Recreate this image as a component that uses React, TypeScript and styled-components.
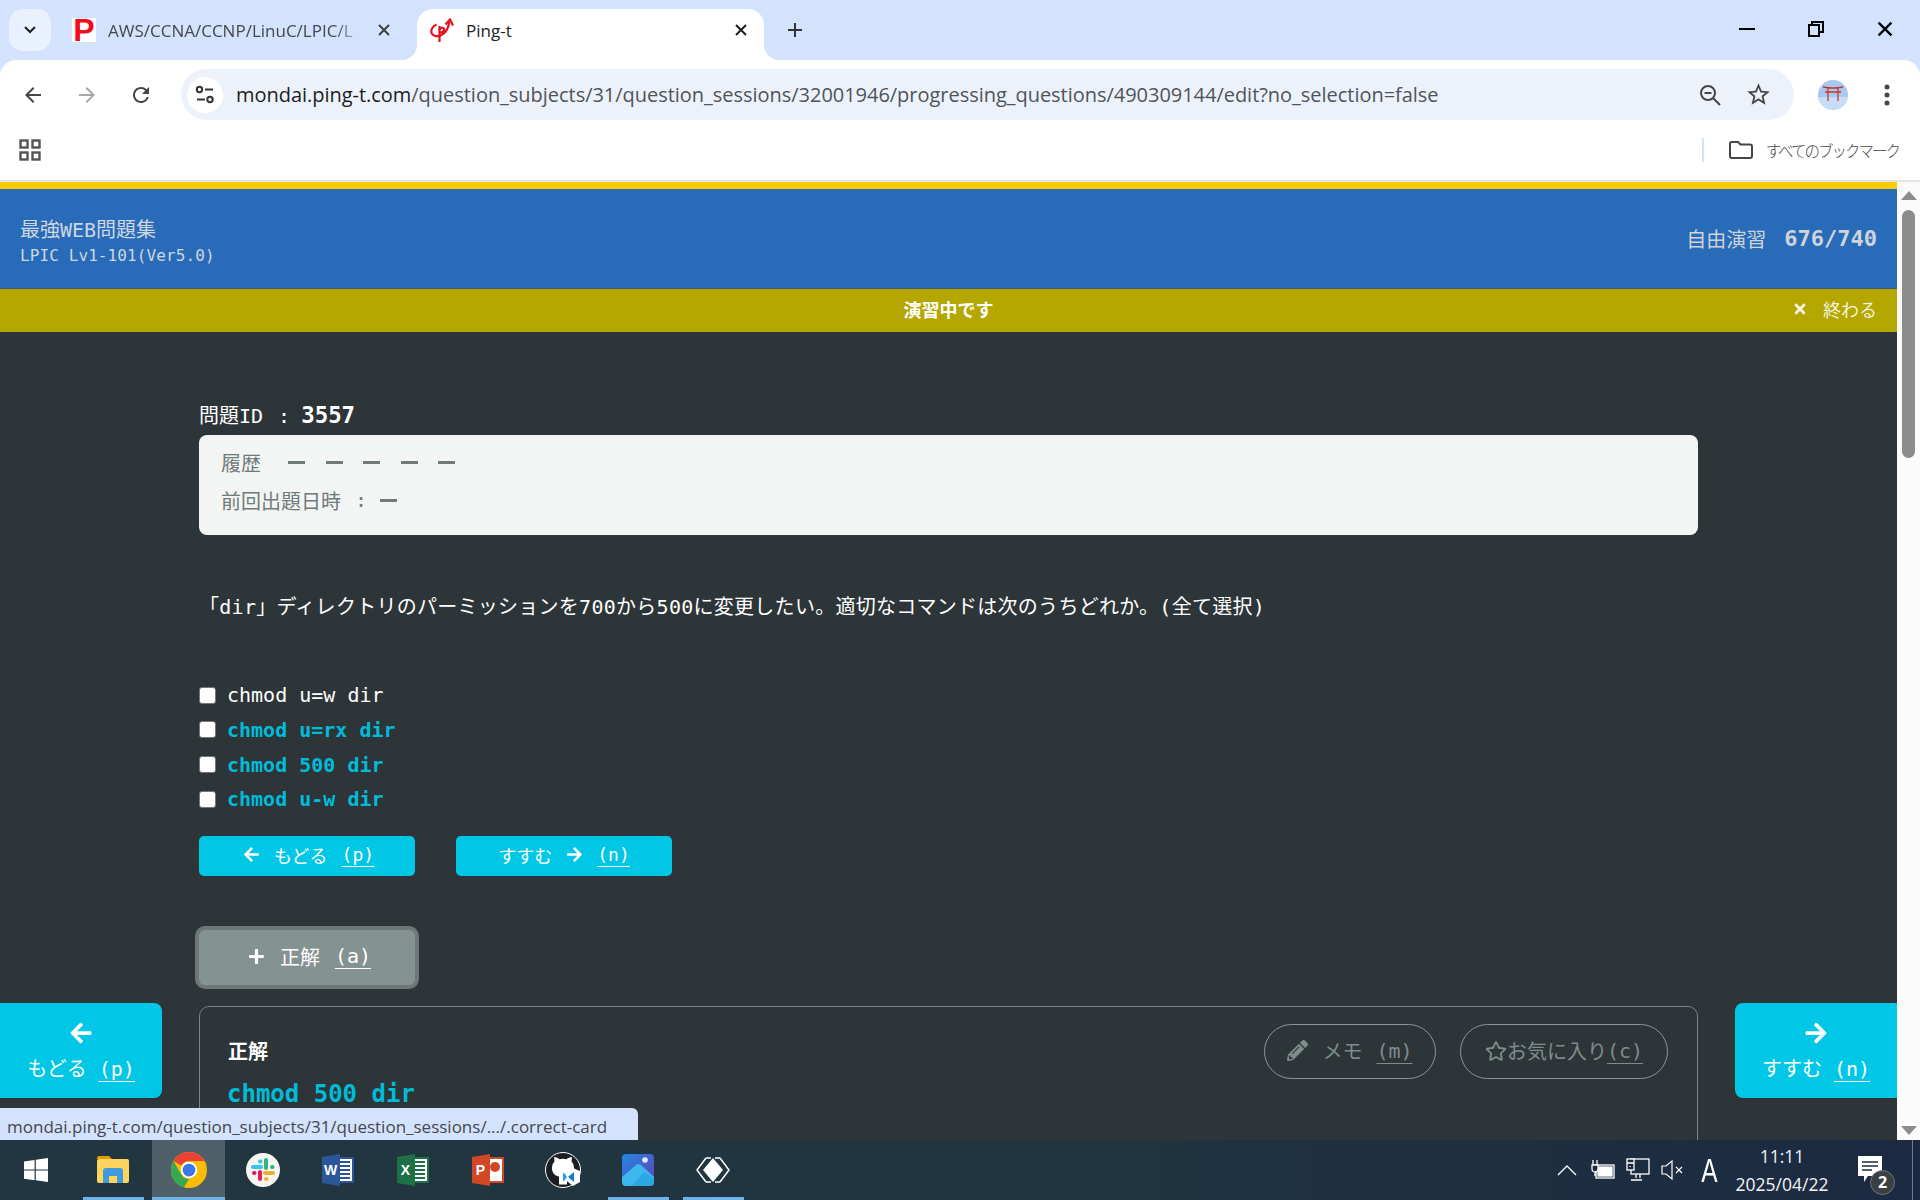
import React from "react";
import styled, { createGlobalStyle } from "styled-components";
import { FaArrowLeft, FaArrowRight, FaPlus, FaTimes, FaPencilAlt, FaRegStar } from "react-icons/fa";

const MONO = `"DejaVu Sans Mono", "Noto Sans CJK JP", monospace`;
const UI = `"Open Sans", "Noto Sans CJK JP", sans-serif`;

const Global = createGlobalStyle`
  html, body { margin: 0; padding: 0; height: 1200px; overflow: hidden; background: #2e3538; }
  * { box-sizing: border-box; }
`;

const Screen = styled.div`
  width: 1920px; height: 1200px; display: flex; flex-direction: column; overflow: hidden;
  background: #d3e3fd; font-family: ${UI};
`;

/* ---------- browser chrome ---------- */
const TabStrip = styled.div`
  height: 60px; flex: none; display: flex; align-items: flex-start; background: #d3e3fd;
`;
const TabListButton = styled.div`
  width: 42px; height: 42px; margin: 9px 0 0 9px; border-radius: 14px; background: #e9f0fe;
  display: flex; align-items: center; justify-content: center;
`;
const InactiveTab = styled.div`
  width: 366px; height: 42px; margin-top: 9px; padding: 0 0 0 21px;
  display: flex; align-items: center; color: #44474c;
`;
const FaviconP = styled.span`
  width: 24px; height: 24px; flex: none; background: #fff; color: #f10d1c; display: flex;
  align-items: center; justify-content: center;
  font: bold 32px/24px "Liberation Sans", sans-serif;
`;
const TabTitle = styled.span<{ $w: number; $fade?: boolean; $dark?: boolean }>`
  width: ${p => p.$w}px; margin-left: 12px; font-size: 17px; white-space: nowrap;
  color: ${p => (p.$dark ? "#202124" : "#44474c")};
  ${p => p.$fade && "-webkit-mask-image: linear-gradient(90deg,#000 90%,rgba(0,0,0,.25) 100%);"}
`;
const TabClose = styled.span<{ $ml: number }>`
  margin-left: ${p => p.$ml}px; width: 14px; height: 14px; display: flex; flex: none;
`;
const ActiveTab = styled.div`
  position: relative; width: 347px; height: 51px; margin-top: 9px; padding: 0 0 9px 13px;
  background: #fff; border-radius: 16px 16px 0 0; display: flex; align-items: center;
  &::before, &::after { content: ""; position: absolute; bottom: 0; width: 16px; height: 16px; }
  &::before { left: -16px; background: radial-gradient(circle at 0 0, transparent 16px, #fff 16.5px); }
  &::after { right: -16px; background: radial-gradient(circle at 100% 0, transparent 16px, #fff 16.5px); }
`;
const NewTab = styled.div`
  width: 62px; height: 42px; margin-top: 9px; display: flex; align-items: center; justify-content: center;
`;
const WindowControls = styled.div`margin-left: auto; display: flex; padding-right: 1px;`;
const WindowButton = styled.div`
  width: 69px; height: 58px; display: flex; align-items: center; justify-content: center;
`;

const Toolbar = styled.div`
  height: 60px; flex: none; background: #fff; border-radius: 16px 16px 0 0;
  display: flex; align-items: flex-start; padding-left: 6px;
`;
const NavCell = styled.div`
  width: 54px; height: 51px; margin-top: 9px; display: flex; align-items: center; justify-content: center;
`;
const Omnibox = styled.div`
  width: 1613px; height: 51px; margin: 9px 0 0 13px; border-radius: 26px; background: #edf2fa;
  display: flex; align-items: center; padding-left: 6px;
`;
const SiteBadge = styled.div`
  width: 36px; height: 36px; border-radius: 50%; background: #fff; flex: none;
  display: flex; align-items: center; justify-content: center;
`;
const Url = styled.div`
  margin-left: 13px; flex: 1; font-size: 20px; color: #50545a; white-space: nowrap; letter-spacing: -0.03px;
  b { font-weight: 400; color: #1c1e21; }
`;
const OmniIcon = styled.div<{ $mr?: number }>`
  width: 48px; height: 48px; display: flex; align-items: center; justify-content: center; margin-right: ${p => p.$mr ?? 0}px;
`;
const Avatar = styled.div`
  width: 30px; height: 30px; margin: 20px 0 0 24px; border-radius: 50%; overflow: hidden; flex: none;
`;
const MenuDots = styled.div`
  margin: 20px 0 0 24px; width: 30px; height: 30px; display: flex; align-items: center; justify-content: center;
`;

const BookmarkBar = styled.div`
  height: 62px; flex: none; background: #fff; border-bottom: 2px solid #e3e3e3;
  display: flex; align-items: center; padding-left: 19px; padding-bottom: 1px;
`;
const BookmarkDivider = styled.div`
  margin-left: auto; width: 2px; height: 24px; background: #d3e3fd;
`;
const BookmarkFolder = styled.div`margin-left: 25px; display: flex;`;
const BookmarkLabel = styled.div`
  margin: 0 21px 0 13px; font-size: 15.5px; letter-spacing: -2px; color: #44474c; font-family: "Noto Sans CJK JP", sans-serif; font-weight: 300;
`;

/* ---------- viewport ---------- */
const Viewport = styled.div`flex: 1; min-height: 0; display: flex; overflow: hidden; position: relative;`;
const Page = styled.div`
  width: 1897px; flex: none; position: relative; overflow: hidden; background: #2e3538;
  font-family: ${MONO}; color: #fff;
`;
const YellowRule = styled.div`height: 7px; background: #ffcb05;`;
const Header = styled.header`
  height: 100px; background: #286bb9; border-bottom: 1px solid #43586e;
  display: flex; align-items: center; justify-content: space-between; padding: 0 20px 0 20px; color: #cfd6e0;
`;
const BrandTitle = styled.div`font-size: 20px; line-height: 30px; margin-top: 4px;`;
const BrandSub = styled.div`font-size: 16px; line-height: 22px; letter-spacing: 0.1px;`;
const Progress = styled.div`display: flex; align-items: center; gap: 18px; font-size: 20px; color: #cfd3da;`;
const ProgressCount = styled.span`font-size: 22px; font-weight: 700;`;

const StatusBar = styled.div`
  height: 43px; background: #b3a700; display: flex; align-items: center; position: relative; padding: 0 20px 4px;
`;
const StatusText = styled.div`flex: 1; text-align: center; font-size: 18px; font-weight: 700;`;
const QuitLink = styled.div`
  position: absolute; right: 20px; top: 0; height: 100%; padding-bottom: 4px; display: flex; align-items: center; gap: 15px; font-size: 18px; color: #f5f3dc;
`;

const Main = styled.main`padding: 68px 0 0 199px; width: 1698px;`;
const QuestionId = styled.div`
  height: 35px; font-size: 20px; line-height: 30px; display: flex; align-items: baseline; gap: 11px; word-spacing: 3px;
  strong { font-size: 22.4px; }
`;
const HistoryCard = styled.section`
  height: 100px; background: #f3f5f4; border-radius: 8px; padding: 9px 22px; color: #6f7b7b; font-size: 20px;
`;
const HistoryRow = styled.div`height: 37.5px; display: flex; align-items: center;`;
const Dash = styled.span<{ $ml: number }>`
  display: inline-block; width: 17px; height: 3px; background: #6f7b7b; margin-left: ${p => p.$ml}px;
`;
const Colon = styled.span`margin-left: 14px; width: 12px;`;
const Question = styled.p`margin: 57px 0 0; height: 30px; line-height: 30px; font-size: 20px; color: #fff; white-space: nowrap;
  letter-spacing: 0.27px;
`;
const Options = styled.div`margin-top: 56px; display: flex; flex-direction: column;`;
const Option = styled.label<{ $correct?: boolean }>`
  height: 34.67px; display: flex; align-items: center; gap: 11px; font-size: 20px;
  color: ${p => (p.$correct ? "#00bcd8" : "#fff")}; font-weight: ${p => (p.$correct ? 700 : 400)};
`;
const Check = styled.input`
  appearance: none; width: 17px; height: 17px; margin: 0; background: #fff; border: 1px solid #767676; border-radius: 3px; flex: none;
`;
const PagerRow = styled.div`margin-top: 19px; display: flex; gap: 41px;`;
const PagerButton = styled.div<{ $pl?: number }>`
  width: 216px; height: 40px; background: #00c7e5; border-radius: 5px; color: #fff; font-size: 18px;
  display: flex; align-items: center; justify-content: center; gap: 14px; padding: 0 0 2px ${p => p.$pl ?? 0}px;
`;
const Key = styled.span`
  text-decoration: underline; text-underline-offset: 5px; text-decoration-thickness: 1px;
`;
const RevealButton = styled.div`
  margin-top: 54px; width: 216px; height: 55px; background: #849292; border-radius: 6px; color: #fff; font-size: 20px;
  box-shadow: 0 0 0 4px #6f7778; display: flex; align-items: center; justify-content: center; gap: 15px; padding: 0 0 2px 5px;
`;
const AnswerCard = styled.section`
  margin-top: 21px; height: 300px; border: 1px solid #7a8484; border-radius: 10px; padding: 17px 29px 0 28px;
`;
const AnswerHead = styled.div`display: flex; align-items: center; height: 55px; gap: 24px;`;
const AnswerLabel = styled.div`font-size: 20px; font-weight: 700; margin: 0 auto 2px 0;`;
const Pill = styled.div<{ $w: number }>`
  width: ${p => p.$w}px; height: 55px; border: 1px solid #8a9696; border-radius: 28px; color: #7f8c8c; font-size: 20px;
  display: flex; align-items: center; justify-content: center; gap: 14px; padding-bottom: 1px;
`;
const TightPill = styled(Pill)`gap: 0;`;
const AnswerText = styled.div`margin: 1px 0 0 -1px; font-size: 24px; line-height: 28px; font-weight: 700; color: #00bcd8;`;

const SideNav = styled.div<{ $side: "left" | "right" }>`
  position: absolute; bottom: 42px; ${p => p.$side}: 0; width: 162px; height: 95px;
  border-radius: ${p => (p.$side === "left" ? "0 8px 8px 0" : "8px 0 0 8px")}; background: #00c7e5; color: #fff; font-size: 20px;
  display: flex; flex-direction: column; align-items: center; padding-top: 18px; gap: 10px;
`;
const SideLabel = styled.div`display: flex; gap: 12px; line-height: 28px;`;
const LinkPreview = styled.div`
  position: absolute; left: 0; bottom: 0; width: 638px; height: 32px; background: #d3e3fd; border-radius: 0 6px 0 0;
  padding: 3px 0 0 7px; font: 17px/32px ${UI}; color: #44474c; white-space: nowrap;
`;

const Scrollbar = styled.aside`
  flex: 1; background: #fbfbfb; display: flex; flex-direction: column; align-items: center; padding-top: 9px;
`;
const ScrollThumb = styled.div`width: 13px; height: 248px; margin-top: 10px; border-radius: 7px; background: #8c8c8c;`;
const ScrollArrow = styled.div<{ $down?: boolean }>`
  width: 0; height: 0; border-left: 8px solid transparent; border-right: 8px solid transparent;
  ${p => (p.$down ? "border-top: 9px solid #8c8c8c; margin-top: auto; margin-bottom: 5px;" : "border-bottom: 9px solid #8c8c8c;")}
`;

/* ---------- taskbar ---------- */
const Taskbar = styled.footer`
  height: 60px; flex: none; display: flex; align-items: stretch; color: #fff;
  background: linear-gradient(90deg, #213640 0%, #213540 50%, #1b2a42 100%);
`;
const TaskCell = styled.div<{ $open?: boolean; $active?: boolean }>`
  width: ${p => (p.$active ? 73 : 75)}px; margin-left: ${p => (p.$active ? 2 : 0)}px; position: relative; display: flex; align-items: center; justify-content: center;
  background: ${p => (p.$active ? "#4f6068" : "transparent")};
  ${p => p.$open && `&::after { content: ""; position: absolute; bottom: 0; height: 3px; background: #6fb3e8;
    left: ${p.$active ? 0 : 8}px; right: ${p.$active ? 0 : 6}px; }`}
`;
const StartCell = styled(TaskCell)`padding-right: 3px;`;
const Tray = styled.div`margin-left: auto; display: flex; align-items: center; padding-right: 22px;`;
const TrayCell = styled.div<{ $w: number }>`
  width: ${p => p.$w}px; height: 100%; display: flex; align-items: center; justify-content: center;
`;
const ImeLetter = styled.span`font: 400 34px/1 "Liberation Sans", sans-serif; transform: scaleX(.72);`;
const Clock = styled.div`
  width: 102px; margin-left: 4px; text-align: center; font-family: "Open Sans", sans-serif; font-size: 17.5px; line-height: 28px; color: #f2f4f6;
`;
const Notify = styled.div`position: relative; width: 40px; margin-left: 17px; height: 100%; display: flex; align-items: center; justify-content: center;`;
const NotifyBadge = styled.span`
  position: absolute; left: 20px; top: 30px; width: 25px; height: 25px; border-radius: 50%; background: #3a3f44; border: 1px solid #70757a;
  font: 700 16px/23px "Open Sans", sans-serif; text-align: center; color: #fff;
`;
const TrayEdge = styled.div`width: 1px; background: #6b7a8c;`;

const Ic = ({ d, s = 24, c = "#444746" }: { d: string; s?: number; c?: string }) => (
  <svg width={s} height={s} viewBox="0 0 24 24" fill={c}><path d={d} /></svg>
);
const ARROW_L = "M20 11H7.83l5.59-5.59L12 4l-8 8 8 8 1.41-1.41L7.83 13H20v-2z";
const ARROW_R = "M4 11h12.17l-5.59-5.59L12 4l8 8-8 8-1.41-1.41L16.17 13H4v-2z";
const RELOAD = "M17.65 6.35A7.958 7.958 0 0 0 12 4c-4.42 0-7.99 3.58-7.99 8s3.57 8 7.99 8c3.73 0 6.84-2.55 7.73-6h-2.08A5.99 5.99 0 0 1 12 18c-3.31 0-6-2.69-6-6s2.69-6 6-6c1.66 0 3.14.69 4.22 1.78L13 11h7V4l-2.35 2.35z";
const STAR = "M22 9.24l-7.19-.62L12 2 9.19 8.63 2 9.24l5.46 4.73L5.82 21 12 17.27 18.18 21l-1.63-7.03L22 9.24zM12 15.4l-3.76 2.27 1-4.28-3.32-2.88 4.38-.38L12 6.1l1.71 4.04 4.38.38-3.32 2.88 1 4.28L12 15.4z";

const XMark = ({ s = 14, w = 2, c = "#1f1f1f" }: { s?: number; w?: number; c?: string }) => (
  <svg width={s} height={s} viewBox="0 0 14 14" stroke={c} strokeWidth={w} fill="none"><path d="M2 2l10 10M12 2L2 12" /></svg>
);

const PingLogo = () => (
  <svg width="24" height="25" viewBox="0 0 24 25" fill="none" stroke="#e60f1e" strokeWidth="2.2">
    <path d="M9.5 8v16" />
    <path d="M6.5 6.500C2 8.500.5 12.500 1.800 15.500c1.500 3 6 3.500 9.500 1.500 4-2 7-6 8-13" />
    <path d="M9.5 12c1-3 5-3 4.500 0-.3 2-3 3-4.500 2" />
    <path d="M15.5 6.500L20 1.500l3 6" />
  </svg>
);

const WinLogo = () => (
  <svg width="24" height="24" viewBox="0 0 24 24" fill="#fff"><path d="M0 3.4l10.6-1.5v9.5H0zM11.8 1.7L24 0v11.4H11.8zM0 12.6h10.6v9.6L0 20.7zM11.8 12.6H24V24l-12.2-1.8z" /></svg>
);
const Explorer = () => (
  <svg width="32" height="30" viewBox="0 0 32 30">
    <path d="M0 3a2 2 0 0 1 2-2h10l3 3h-15z" fill="#dfa200" />
    <rect x="0" y="4" width="32" height="24" rx="2" fill="#fcd45f" />
    <path d="M6 28V16a3 3 0 0 1 3-3h14a3 3 0 0 1 3 3v12h-6v-7h-8v7z" fill="#3f9bdb" />
  </svg>
);
const ChromeLogo = () => (
  <svg width="36" height="36" viewBox="0 0 48 48">
    <circle cx="24" cy="24" r="24" fill="#fbbc04" />
    <path d="M24 0a24 24 0 0 1 20.8 12H24a12 12 0 0 0-10.4 6L3.2 12A24 24 0 0 1 24 0z" fill="#ea4335" />
    <path d="M3.2 12l10.4 18A12 12 0 0 0 24 36l-6.8 11A24 24 0 0 1 3.2 12z" fill="#34a853" />
    <circle cx="24" cy="24" r="11" fill="#fff" /><circle cx="24" cy="24" r="8.5" fill="#3b78e7" />
  </svg>
);
const SlackLogo = () => (
  <svg width="34" height="34" viewBox="0 0 34 34">
    <circle cx="17" cy="17" r="17" fill="#f7f5f2" />
    <g strokeWidth="4" strokeLinecap="round" fill="none">
      <path d="M14 8.500h.5" stroke="#36c5f0" /><path d="M7 14h8" stroke="#36c5f0" />
      <path d="M20 7v8" stroke="#2eb67d" /><path d="M26 14h.5" stroke="#2eb67d" />
      <path d="M19 20h8" stroke="#ecb22e" /><path d="M20 26h.5" stroke="#ecb22e" />
      <path d="M14 19v7" stroke="#e01e5a" /><path d="M8 20h.5" stroke="#e01e5a" />
    </g>
  </svg>
);
const OfficeIcon = ({ c, l, lines }: { c: string; l: string; lines: boolean }) => (
  <svg width="32" height="32" viewBox="0 0 32 32">
    <rect x="14" y="4" width="17" height="24" fill="#fff" stroke={c} strokeWidth="2" />
    {lines ? [8, 12, 16, 20, 24].map(y => <path key={y} d={`M17 ${y}h11`} stroke={c} strokeWidth="2" />) : <circle cx="23" cy="13" r="5" fill={c} />}
    <path d="M0 3l18-3v32L0 29z" fill={c} />
    <text x="8.5" y="21" textAnchor="middle" fontFamily="Liberation Sans, sans-serif" fontWeight="700" fontSize="14" fill="#fff">{l}</text>
  </svg>
);
const GitCode = () => (
  <svg width="36" height="36" viewBox="0 0 36 36">
    <circle cx="18" cy="18" r="17.5" fill="#1b1f23" stroke="#fff" strokeWidth="1" />
    <path d="M7 16c0-3 1-5 2.500-6.500L9 5c2 0 4 1 5.500 2.200a14 14 0 0 1 7 0C23 6 25 5 27 5l-.5 4.500C28 11 29 13 29 16c0 6-4 8-7 8.500v8h-8v-8C11 24 7 22 7 16z" fill="#fff" />
    <path d="M28 16l7 3v11l-7 4-8-6.500-3 2.500-2-1 4-5-4-5 2-1 3 2.500z" fill="#fff" />
    <path d="M29 20v10l-6-5z" fill="#0a7fd1" /><path d="M20 22l-2-1.500v9L20 28l2-3z" fill="#2aa0e8" />
  </svg>
);
const PhotosIcon = () => (
  <svg width="32" height="32" viewBox="0 0 32 32">
    <defs><linearGradient id="ph" x1="0" y1="0" x2="1" y2="1"><stop offset="0" stopColor="#1e88e5" /><stop offset="1" stopColor="#6a3fb5" /></linearGradient></defs>
    <rect width="32" height="32" rx="4" fill="url(#ph)" />
    <circle cx="23" cy="6" r="2.800" fill="#e8e6f5" />
    <path d="M0 23L14 11a4 4 0 0 1 5 0l13 12v5a4 4 0 0 1-4 4H4a4 4 0 0 1-4-4z" fill="#3db8ee" />
    <path d="M10 32l12-14 10 7v3a4 4 0 0 1-4 4z" fill="#1c9bd9" opacity=".55" />
  </svg>
);
const DiamondApp = () => (
  <svg width="34" height="28" viewBox="0 0 34 28">
    <path d="M17 2L27 14 17 26 7 14z" fill="#fff" />
    <path d="M10 2L1 14l9 12M24 2l9 12-9 12" fill="none" stroke="#fff" strokeWidth="1.500" />
    <path d="M10 2h5M10 26h5M19 2h5M19 26h5" stroke="#fff" strokeWidth="1.500" />
  </svg>
);

export default function App() {
  return (
    <Screen>
      <Global />
      <TabStrip>
        <TabListButton>
          <svg width="14" height="10" viewBox="0 0 14 10" fill="none" stroke="#1f1f1f" strokeWidth="2"><path d="M2 2l5 5 5-5" /></svg>
        </TabListButton>
        <InactiveTab>
          <FaviconP>P</FaviconP>
          <TabTitle $w={250} $fade>AWS/CCNA/CCNP/LinuC/LPIC/L</TabTitle>
          <TabClose $ml={19}><XMark c="#3c4043" /></TabClose>
        </InactiveTab>
        <ActiveTab>
          <PingLogo />
          <TabTitle $w={252} $dark>Ping-t</TabTitle>
          <TabClose $ml={16}><XMark /></TabClose>
        </ActiveTab>
        <NewTab>
          <svg width="16" height="16" viewBox="0 0 16 16" stroke="#333" strokeWidth="2"><path d="M8 1v14M1 8h14" /></svg>
        </NewTab>
        <WindowControls>
          <WindowButton>
            <svg width="16" height="2"><rect width="16" height="2" fill="#000" /></svg>
          </WindowButton>
          <WindowButton>
            <svg width="16" height="16" viewBox="0 0 16 16" fill="none" stroke="#000" strokeWidth="2"><rect x="1" y="4" width="10" height="11" /><path d="M4 4V1h11v10h-4" /></svg>
          </WindowButton>
          <WindowButton><XMark s={18} w={1.8} c="#000" /></WindowButton>
        </WindowControls>
      </TabStrip>

      <Toolbar>
        <NavCell><Ic d={ARROW_L} /></NavCell>
        <NavCell><Ic d={ARROW_R} c="#a8a8a8" /></NavCell>
        <NavCell><Ic d={RELOAD} /></NavCell>
        <Omnibox>
          <SiteBadge>
            <svg width="20" height="20" viewBox="0 0 20 20" fill="none" stroke="#333" strokeWidth="2">
              <circle cx="4.500" cy="4.500" r="2.700" /><path d="M10 4.500h8M2 14.500h8" /><circle cx="15" cy="14.500" r="2.700" />
            </svg>
          </SiteBadge>
          <Url><b>mondai.ping-t.com</b>/question_subjects/31/question_sessions/32001946/progressing_questions/490309144/edit?no_selection=false</Url>
          <OmniIcon>
            <svg width="24" height="24" viewBox="0 0 24 24" fill="none" stroke="#444746" strokeWidth="2"><circle cx="10" cy="10" r="7" /><path d="M15 15l7 7M6.500 10h7" /></svg>
          </OmniIcon>
          <OmniIcon $mr={12}><Ic d={STAR} s={27} /></OmniIcon>
        </Omnibox>
        <Avatar>
          <svg width="30" height="30" viewBox="0 0 30 30">
            <rect width="30" height="30" fill="#a9c8f0" /><rect y="17" width="30" height="13" fill="#c7dcf7" />
            <path d="M5 7q10 2 20 0M7 12h16M10 8v13M20 8v13" stroke="#c0392b" strokeWidth="1.300" fill="none" />
          </svg>
        </Avatar>
        <MenuDots>
          <svg width="6" height="22" viewBox="0 0 6 22" fill="#444746"><circle cx="3" cy="3" r="2.500" /><circle cx="3" cy="11" r="2.500" /><circle cx="3" cy="19" r="2.500" /></svg>
        </MenuDots>
      </Toolbar>

      <BookmarkBar>
        <svg width="22" height="22" viewBox="0 0 22 22" fill="none" stroke="#555" strokeWidth="2.400"><rect x="1.500" y="1.500" width="7" height="7" /><rect x="13.500" y="1.500" width="7" height="7" /><rect x="1.500" y="13.500" width="7" height="7" /><rect x="13.500" y="13.500" width="7" height="7" /></svg>
        <BookmarkDivider />
        <BookmarkFolder>
          <svg width="24" height="18" viewBox="0 0 24 18" fill="none" stroke="#444746" strokeWidth="2"><path d="M1 3a2 2 0 0 1 2-2h6l2.500 2.500H21a2 2 0 0 1 2 2V15a2 2 0 0 1-2 2H3a2 2 0 0 1-2-2z" /></svg>
        </BookmarkFolder>
        <BookmarkLabel>すべてのブックマーク</BookmarkLabel>
      </BookmarkBar>

      <Viewport>
        <Page>
          <YellowRule />
          <Header>
            <div>
              <BrandTitle>最強WEB問題集</BrandTitle>
              <BrandSub>LPIC Lv1-101(Ver5.0)</BrandSub>
            </div>
            <Progress>自由演習<ProgressCount>676/740</ProgressCount></Progress>
          </Header>
          <StatusBar>
            <StatusText>演習中です</StatusText>
            <QuitLink><FaTimes size={16} />終わる</QuitLink>
          </StatusBar>
          <Main>
            <QuestionId>問題ID :<strong>3557</strong></QuestionId>
            <HistoryCard>
              <HistoryRow>
                履歴<Dash $ml={27} /><Dash $ml={20.5} /><Dash $ml={20.5} /><Dash $ml={20.5} /><Dash $ml={20.5} />
              </HistoryRow>
              <HistoryRow>前回出題日時<Colon>:</Colon><Dash $ml={13} /></HistoryRow>
            </HistoryCard>
            <Question>「dir」ディレクトリのパーミッションを700から500に変更したい。適切なコマンドは次のうちどれか。(全て選択)</Question>
            <Options>
              <Option><Check type="checkbox" />chmod u=w dir</Option>
              <Option $correct><Check type="checkbox" />chmod u=rx dir</Option>
              <Option $correct><Check type="checkbox" />chmod 500 dir</Option>
              <Option $correct><Check type="checkbox" />chmod u-w dir</Option>
            </Options>
            <PagerRow>
              <PagerButton $pl={3}><FaArrowLeft size={17} />もどる<Key>(p)</Key></PagerButton>
              <PagerButton>すすむ<FaArrowRight size={17} /><Key>(n)</Key></PagerButton>
            </PagerRow>
            <RevealButton><FaPlus size={17} />正解<Key>(a)</Key></RevealButton>
            <AnswerCard>
              <AnswerHead>
                <AnswerLabel>正解</AnswerLabel>
                <Pill $w={172}><FaPencilAlt size={21} />メモ<Key>(m)</Key></Pill>
                <TightPill $w={208}><FaRegStar size={22} />お気に入り<Key>(c)</Key></TightPill>
              </AnswerHead>
              <AnswerText>chmod 500 dir</AnswerText>
            </AnswerCard>
          </Main>
          <SideNav $side="left"><FaArrowLeft size={24} /><SideLabel>もどる<Key>(p)</Key></SideLabel></SideNav>
          <SideNav $side="right"><FaArrowRight size={24} /><SideLabel>すすむ<Key>(n)</Key></SideLabel></SideNav>
          <LinkPreview>mondai.ping-t.com/question_subjects/31/question_sessions/.../.correct-card</LinkPreview>
        </Page>
        <Scrollbar>
          <ScrollArrow />
          <ScrollThumb />
          <ScrollArrow $down />
        </Scrollbar>
      </Viewport>

      <Taskbar>
        <StartCell><WinLogo /></StartCell>
        <TaskCell $open><Explorer /></TaskCell>
        <TaskCell $open $active><ChromeLogo /></TaskCell>
        <TaskCell><SlackLogo /></TaskCell>
        <TaskCell><OfficeIcon c="#2b579a" l="W" lines /></TaskCell>
        <TaskCell><OfficeIcon c="#1e7145" l="X" lines /></TaskCell>
        <TaskCell><OfficeIcon c="#d24726" l="P" lines={false} /></TaskCell>
        <TaskCell><GitCode /></TaskCell>
        <TaskCell $open><PhotosIcon /></TaskCell>
        <TaskCell $open><DiamondApp /></TaskCell>
        <Tray>
          <TrayCell $w={36}>
            <svg width="20" height="12" viewBox="0 0 20 12" fill="none" stroke="#fff" strokeWidth="1.300"><path d="M1 11l9-9 9 9" /></svg>
          </TrayCell>
          <TrayCell $w={36}>
            <svg width="24" height="22" viewBox="0 0 24 22" fill="none" stroke="#fff" strokeWidth="1.300"><rect x="5" y="6" width="18" height="13" /><rect x="7" y="8" width="14" height="9" fill="#fff" /><path d="M2 1v5M6 1v5M1 6h6v4a3 3 0 0 1-6 0zM4 13v4" fill="#1b2a42" /></svg>
          </TrayCell>
          <TrayCell $w={34}>
            <svg width="24" height="24" viewBox="0 0 24 24" fill="none" stroke="#fff" strokeWidth="1.300"><rect x="5" y="1" width="18" height="15" /><rect x="1" y="1" width="7" height="11" fill="#1b2a42" /><path d="M1 5h7M4 8v1M10 16v4M5 22h11M14 16v4" /></svg>
          </TrayCell>
          <TrayCell $w={36}>
            <svg width="24" height="22" viewBox="0 0 24 22" fill="none" stroke="#fff" strokeWidth="1.200"><path d="M1 7h4l6-5v18l-6-5H1zM15 8l6 6M21 8l-6 6" /></svg>
          </TrayCell>
          <TrayCell $w={36}><ImeLetter>A</ImeLetter></TrayCell>
          <Clock>11:11<br />2025/04/22</Clock>
          <Notify>
            <svg width="24" height="28" viewBox="0 0 24 28" fill="#fff"><path d="M0 0h24v20H10l-4 6v-6H0z" /><path d="M4 6h16M4 10h16M4 14h10" stroke="#1b2a42" strokeWidth="1.300" /></svg>
            <NotifyBadge>2</NotifyBadge>
          </Notify>
        </Tray>
        <TrayEdge />
        <TrayCell $w={7} />
      </Taskbar>
    </Screen>
  );
}
